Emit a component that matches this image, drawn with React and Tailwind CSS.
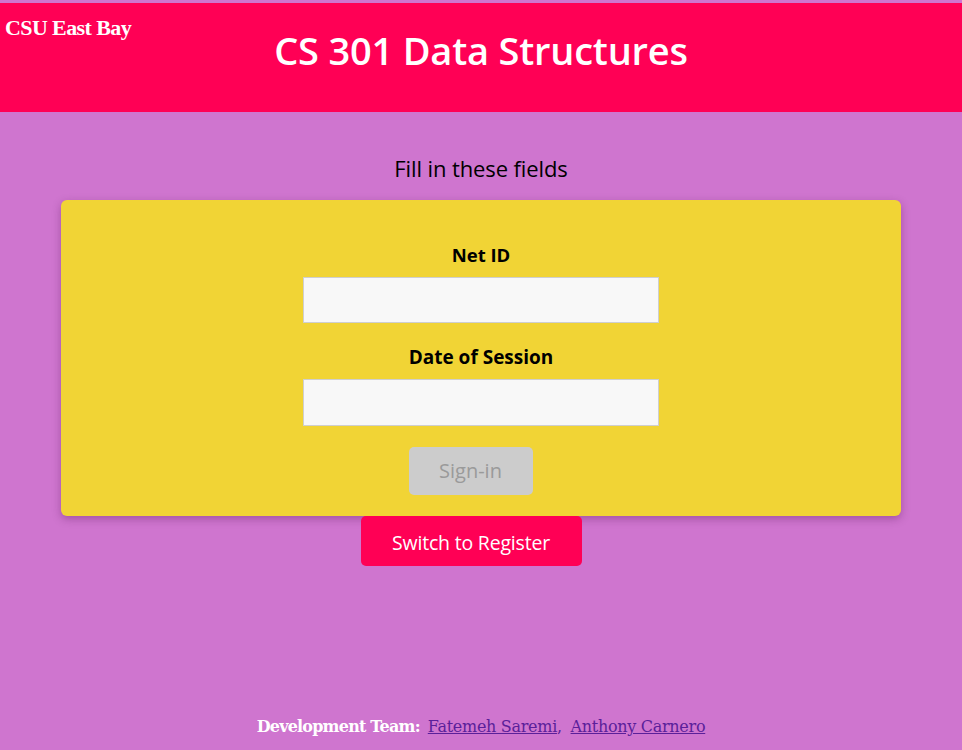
export default function App() {
  return (
    <div className="min-h-screen flex flex-col bg-[#cf75cf]">
      <header className="mt-[3px] h-[109px] bg-[#ff0055] grid grid-cols-[1fr_auto_1fr]">
        <div className="pt-[11px] pl-[5px] text-white font-bold text-[22px] leading-[28px] tracking-[-0.6px] [font-family:'Liberation_Serif',serif]">
          CSU East Bay
        </div>
        <h1 className="pt-[23px] text-white text-[38px] leading-[48px] font-semibold [font-family:'Open_Sans',sans-serif] tracking-[-0.2px]">
          CS 301 Data Structures
        </h1>
        <div />
      </header>
      <main className="flex flex-col items-center [font-family:'Open_Sans',sans-serif]">
        <p className="mt-[41px] text-[22px] leading-[30px] font-medium text-black tracking-[-0.1px]">Fill in these fields</p>
        <div className="mt-[17px] w-[840px] h-[316px] bg-[#f1d435] rounded-[6px] shadow-[0_3px_8px_rgba(80,20,80,0.35)] flex flex-col items-center">
          <label className="mt-[42px] font-bold text-[18.5px] leading-[26px] text-black">Net ID</label>
          <input className="mt-[9px] w-[356px] h-[46px] bg-[#f8f8f8] border border-[#cfcfcf] outline-none" />
          <label className="mt-[21px] font-bold text-[19px] leading-[26px] text-black">Date of Session</label>
          <input className="mt-[9px] w-[356px] h-[47px] bg-[#f8f8f8] border border-[#cfcfcf] outline-none" />
          <button className="mt-[21px] mr-[21px] w-[124px] h-[48px] rounded-[5px] bg-[#cccccc] text-[#9a9a9a] text-[20px]">Sign-in</button>
        </div>
        <button className="mr-[20px] w-[221px] h-[50px] rounded-[5px] bg-[#ff0055] text-white text-[19.5px] leading-[28px] pt-[3px] tracking-[-0.2px]">Switch to Register</button>
      </main>
      <footer className="mt-auto pb-[11px] flex justify-center items-baseline gap-[8px] text-[16px] leading-[24px] [font-family:'DejaVu_Serif',serif]">
        <span className="text-white font-bold tracking-[-0.8px]">Development Team:</span>
        <span className="text-[#5b1f9a] tracking-[-0.3px]">
          <a href="#" className="underline">Fatemeh Saremi</a>,{" "}
          <a href="#" className="underline ml-[4px]">Anthony Carnero</a>
        </span>
      </footer>
    </div>
  );
}
